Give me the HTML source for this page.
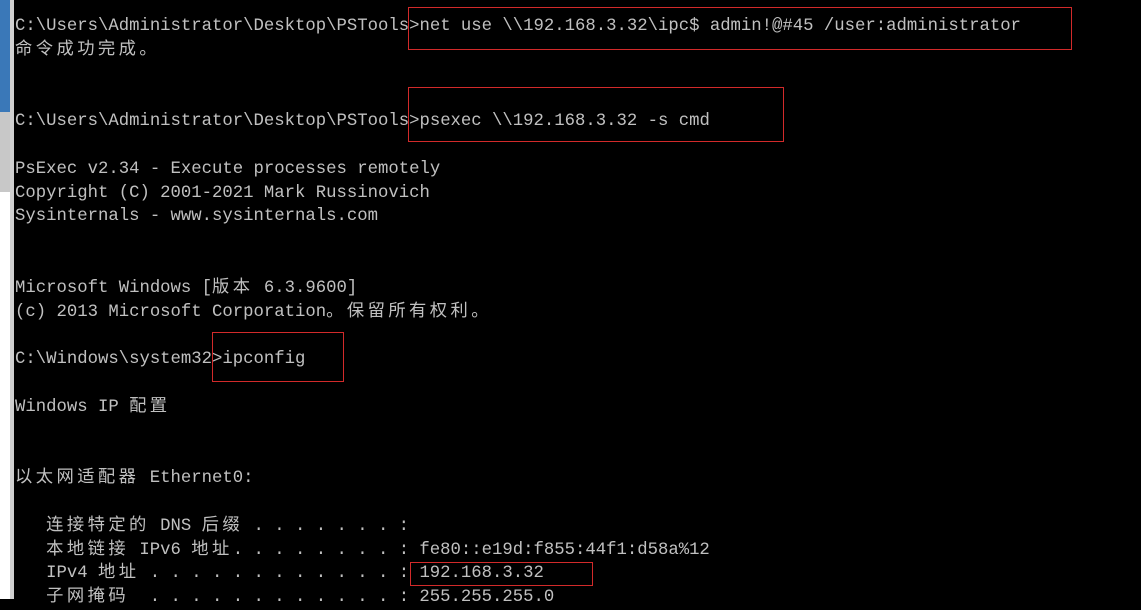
<!DOCTYPE html>
<html><head><meta charset="utf-8"><style>
html,body{margin:0;padding:0;width:1141px;height:599px;overflow:hidden;background:#000}
#strip{position:absolute;left:0;top:0;width:10px;height:599px;background:#fff}
#sb{position:absolute;left:10px;top:0;width:4px;height:599px;background:#d0d0d0}
#blue{position:absolute;left:0;top:0;width:10px;height:112px;background:#3a78b8}
#grey{position:absolute;left:0;top:112px;width:10px;height:80px;background:#c8c8c8}
pre{position:absolute;left:15px;top:15px;margin:0;font-family:"Liberation Mono","Noto Sans CJK SC",monospace;font-size:17.3px;line-height:23.8px;color:#c0c0c0;white-space:pre}
.c{letter-spacing:3.45px}
.b{position:absolute;border:1px solid #d22a2a}
</style></head><body>
<div id="strip"></div><div id="blue"></div><div id="grey"></div><div id="sb"></div>
<pre>C:\Users\Administrator\Desktop\PSTools>net use \\192.168.3.32\ipc$ admin!@#45 /user:administrator
<span class="c">命令成功完成。</span>


C:\Users\Administrator\Desktop\PSTools>psexec \\192.168.3.32 -s cmd

PsExec v2.34 - Execute processes remotely
Copyright (C) 2001-2021 Mark Russinovich
Sysinternals - www.sysinternals.com


Microsoft Windows [<span class="c">版本</span> 6.3.9600]
(c) 2013 Microsoft Corporation<span class="c">。保留所有权利。</span>

C:\Windows\system32>ipconfig

Windows IP <span class="c">配置</span>


<span class="c">以太网适配器</span> Ethernet0:

   <span class="c">连接特定的</span> DNS <span class="c">后缀</span> . . . . . . . :
   <span class="c">本地链接</span> IPv6 <span class="c">地址</span>. . . . . . . . : fe80::e19d:f855:44f1:d58a%12
   IPv4 <span class="c">地址</span> . . . . . . . . . . . . : 192.168.3.32
   <span class="c">子网掩码</span>  . . . . . . . . . . . . : 255.255.255.0</pre>
<div class="b" style="left:408px;top:7px;width:662px;height:41px"></div>
<div class="b" style="left:408px;top:87px;width:374px;height:53px"></div>
<div class="b" style="left:212px;top:332px;width:130px;height:48px"></div>
<div class="b" style="left:410px;top:562px;width:181px;height:22px"></div>
</body></html>
